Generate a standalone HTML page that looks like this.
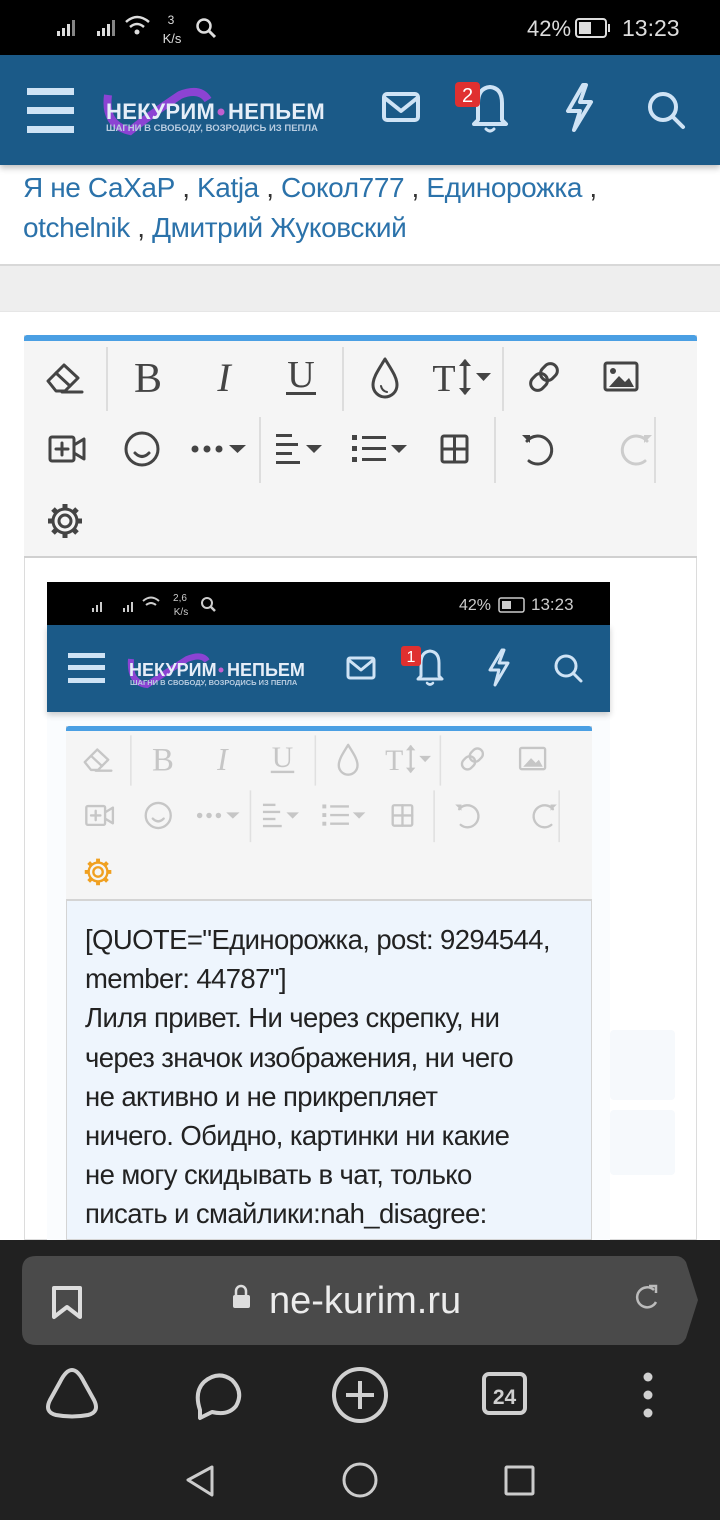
<!DOCTYPE html>
<html><head><meta charset="utf-8"><style>
*{margin:0;padding:0;box-sizing:border-box}
body{width:720px;height:1520px;overflow:hidden;background:#fff;font-family:"Liberation Sans",sans-serif;position:relative}
.abs{position:absolute}
.names{left:23px;top:168px;font-size:28px;line-height:40px;color:#2b72aa;letter-spacing:-0.4px}
.names span{color:#333}
.qt{left:85px;top:920px;font-size:27.5px;line-height:39.2px;color:#222;letter-spacing:-0.6px;white-space:nowrap}
</style></head><body>
<div class="abs" style="left:0;top:0;width:720px;height:55px;background:#000"></div>
<svg class="abs" style="left:0;top:0" width="720" height="55" fill="#ddd" stroke="#ddd">
<g stroke="none"><rect x="57" y="31" width="3" height="5"/><rect x="62" y="28" width="3" height="8"/><rect x="67" y="24" width="3" height="12"/><rect x="72" y="20" width="3" height="16" opacity=".6"/>
<rect x="97" y="31" width="3" height="5"/><rect x="102" y="28" width="3" height="8"/><rect x="107" y="24" width="3" height="12"/><rect x="112" y="20" width="3" height="16" opacity=".6"/></g>
<g fill="none" stroke-width="2.5"><path d="M126 22 Q137 12 149 22"/><path d="M130 27 Q137 21 144 27"/></g><circle cx="137" cy="32" r="2.5" stroke="none"/>
<text x="171" y="24" font-size="12" text-anchor="middle" stroke="none">3</text><text x="172" y="43" font-size="13" text-anchor="middle" stroke="none">K/s</text>
<circle cx="204" cy="26" r="6.5" fill="none" stroke-width="2.5"/><path d="M209 31 L215 37" stroke-width="3"/>
<text x="527" y="36" font-size="22" stroke="none">42%</text>
<rect x="576" y="19" width="30" height="18" rx="3" fill="none" stroke-width="2"/><rect x="579" y="22" width="12" height="12" stroke="none"/><rect x="608" y="24" width="2" height="8" stroke="none"/>
<text x="622" y="36" font-size="23" stroke="none">13:23</text>
</svg>
<div class="abs" style="left:0;top:55px;width:720px;height:110px;background:#1b5a88;box-shadow:0 3px 6px rgba(0,0,0,.25)"></div>
<svg class="abs" style="left:0;top:55px" width="720" height="110">
<g fill="#cfe3f5"><rect x="27" y="33" width="47" height="7"/><rect x="27" y="52" width="47" height="7"/><rect x="27" y="71" width="47" height="7"/></g>
<path d="M108 40 Q104 70 130 76 Q150 60 180 40 Q200 32 208 45" fill="none" stroke="#a040e0" stroke-width="8" opacity=".85"/>
<text x="106" y="64" font-size="22" font-weight="bold" fill="#e6eef8" letter-spacing="0.3">НЕКУРИМ</text>
<circle cx="221" cy="57" r="3.5" fill="#c060d0"/>
<text x="228" y="64" font-size="22" font-weight="bold" fill="#e6eef8" letter-spacing="0.3">НЕПЬЕМ</text>
<text x="106" y="76" font-size="9.5" font-weight="bold" fill="#b8cce0">ШАГНИ В СВОБОДУ, ВОЗРОДИСЬ ИЗ ПЕПЛА</text>
<g fill="none" stroke="#cfe3f5" stroke-width="4" stroke-linejoin="round" stroke-linecap="round">
<rect x="384" y="39" width="34" height="26" rx="3"/><path d="M386 44 L401 56 L416 44"/>
<path d="M478 65 L478 48 Q478 33 490 32 Q502 33 502 48 L502 65 L506 69 L474 69 Z"/><path d="M486 74 Q490 78 494 74" stroke-width="3"/>
<path d="M583 30 L568 56 L580 56 L574 75 L591 47 L580 47 L586 30 Z"/>
<circle cx="663" cy="52" r="13"/><path d="M673 62 L683 72"/>
</g>
<rect x="455" y="27" width="25" height="25" rx="4" fill="#e03030"/><text x="467.5" y="47" font-size="20" fill="#fff" text-anchor="middle">2</text>
</svg>
<div class="abs names">Я не СаХаР <span>,</span> Katja <span>,</span> Сокол777 <span>,</span> Единорожка <span>,</span><br>otchelnik <span>,</span> Дмитрий Жуковский</div>
<div class="abs" style="left:0;top:264px;width:720px;height:48px;background:#eeeeee;border-top:2px solid #d8d8d8;border-bottom:1px solid #e6e6e6"></div>
<div class="abs" style="left:24px;top:335px;width:673px;height:905px;border:1px solid #dcdcdc;border-top:none;background:#fff"></div>
<div class="abs" style="left:24px;top:335px;width:673px;height:223px;background:#f5f5f5;border-top:6px solid #4a9fe3;border-bottom:2px solid #d0d0d0;border-radius:3px 3px 0 0"></div>
<svg class="abs" style="left:24px;top:335px" width="673" height="223" color="#444">
<g stroke="#ddd" stroke-width="2"><path d="M83 12V76M319 12V76M479 12V76M236 82V148M471 82V148M631 82V148"/></g>
<g fill="none" stroke="currentColor" stroke-width="3" stroke-linejoin="round" stroke-linecap="round">
<path d="M24 46 L40 30 L54 43 L41 56 L32 56 Z"/><path d="M32 38 L46 51"/><path d="M38 57 H58"/>
<path d="M361 24 C355 34 349 42 349 50 A12 12 0 0 0 373 50 C373 42 367 34 361 24 Z"/><path d="M357 51 Q358 56 363 57" stroke-width="2"/>
<path d="M441 26 V58"/>
<g transform="rotate(-45 520 42)"><rect x="504" y="35" width="18" height="14" rx="7"/><rect x="518" y="35" width="18" height="14" rx="7"/></g>
<rect x="581" y="28" width="32" height="27" rx="2"/>
<rect x="26" y="102" width="24" height="24" rx="2"/><path d="M38 108V120M32 114H44"/><path d="M50 110 L60 104 V124 L50 118"/>
<circle cx="118" cy="114" r="16"/><path d="M111 118 Q118 125 125 118"/>
<rect x="418" y="101" width="25" height="26" rx="2"/><path d="M418 114H443M430.5 101V127"/>
<path d="M503 106 A14 14 0 1 1 505 126"/>
<path d="M623 106 A14 14 0 1 0 621 126" stroke="#ccc"/>
<circle cx="41" cy="186" r="6"/><circle cx="41" cy="186" r="12" stroke-width="3"/>
</g>
<g fill="currentColor">
<text x="124" y="57" font-family="Liberation Serif" font-size="42" text-anchor="middle">B</text>
<text x="200" y="56" font-family="Liberation Serif" font-style="italic" font-size="40" text-anchor="middle">I</text>
<text x="277" y="52" font-family="Liberation Serif" font-size="38" text-anchor="middle">U</text><rect x="262" y="57" width="30" height="3"/>
<text x="420" y="56" font-family="Liberation Serif" font-size="38" text-anchor="middle">T</text>
<path d="M435 31 L441 24 L447 31 Z M435 53 L441 60 L447 53 Z"/><path d="M452 38 H467 L459.5 46 Z"/>
<path d="M585 52 L595 41 L601 47 L605 43 L610 52 Z"/><circle cx="589" cy="36" r="3"/>
<circle cx="171" cy="114" r="3.5"/><circle cx="183" cy="114" r="3.5"/><circle cx="195" cy="114" r="3.5"/><path d="M205 110 H222 L213.5 118 Z"/>
<rect x="252" y="99" width="16" height="3"/><rect x="252" y="108" width="22" height="3"/><rect x="252" y="117" width="16" height="3"/><rect x="252" y="126" width="24" height="3"/><path d="M282 110 H298 L290 118 Z"/>
<rect x="328" y="100" width="5" height="5"/><rect x="328" y="111" width="5" height="5"/><rect x="328" y="122" width="5" height="5"/>
<rect x="338" y="101" width="24" height="3"/><rect x="338" y="112" width="24" height="3"/><rect x="338" y="123" width="24" height="3"/><path d="M367 110 H383 L375 118 Z"/>
<path d="M498 100 L506 100 L506 108 Z"/><path d="M628 100 L620 100 L620 108 Z" fill="#ccc"/>
</g>
<g stroke="currentColor" stroke-width="5"><path d="M41 169V174M41 198V203M24 186H29M53 186H58M29 174L32.5 177.5M49.5 194.5L53 198M29 198L32.5 194.5M49.5 177.5L53 174"/></g>
</svg>
<div class="abs" style="left:47px;top:582px;width:563px;height:658px;background:#fafcfe"></div>
<div class="abs" style="left:47px;top:582px;width:563px;height:43px;background:#000"></div>
<svg class="abs" style="left:47px;top:582px" width="563" height="43" fill="#ccc" stroke="#ccc">
<g stroke="none"><rect x="45" y="26" width="2" height="4"/><rect x="49" y="23" width="2" height="7"/><rect x="53" y="20" width="2" height="10"/><rect x="76" y="26" width="2" height="4"/><rect x="80" y="23" width="2" height="7"/><rect x="84" y="20" width="2" height="10"/></g>
<path d="M96 19 Q104 12 112 19M99 23 Q104 19 109 23" fill="none" stroke-width="2"/>
<text x="133" y="19" font-size="10" text-anchor="middle" stroke="none">2,6</text><text x="134" y="33" font-size="10" text-anchor="middle" stroke="none">K/s</text>
<circle cx="160" cy="21" r="5" fill="none" stroke-width="2"/><path d="M164 25 L168 29" stroke-width="2.5"/>
<text x="412" y="28" font-size="16" stroke="none">42%</text>
<rect x="452" y="16" width="25" height="14" rx="2" fill="none" stroke-width="1.5"/><rect x="455" y="19" width="9" height="8" stroke="none"/>
<text x="484" y="28" font-size="17" stroke="none">13:23</text>
</svg>
<div class="abs" style="left:47px;top:625px;width:563px;height:87px;background:#1b5a88;box-shadow:0 3px 6px rgba(0,0,0,.2)"></div>
<svg class="abs" style="left:47px;top:625px" width="563" height="87">
<g fill="#cfe3f5"><rect x="21" y="28" width="37" height="5"/><rect x="21" y="40" width="37" height="5"/><rect x="21" y="53" width="37" height="5"/></g>
<path d="M84 34 Q82 58 100 60 Q118 48 140 34 Q155 28 160 36" fill="none" stroke="#a040e0" stroke-width="6" opacity=".85"/>
<text x="82" y="51" font-size="18" font-weight="bold" fill="#e6eef8">НЕКУРИМ</text><circle cx="174" cy="45" r="2.5" fill="#c060d0"/>
<text x="180" y="51" font-size="18" font-weight="bold" fill="#e6eef8">НЕПЬЕМ</text>
<text x="83" y="60" font-size="7.5" font-weight="bold" fill="#b8cce0">ШАГНИ В СВОБОДУ, ВОЗРОДИСЬ ИЗ ПЕПЛА</text>
<g fill="none" stroke="#cfe3f5" stroke-width="3" stroke-linejoin="round" stroke-linecap="round">
<rect x="301" y="33" width="26" height="20" rx="2"/><path d="M303 36 L314 45 L325 36"/>
<path d="M374 51 L374 38 Q374 27 383 26 Q392 27 392 38 L392 51 L395 54 L371 54 Z"/><path d="M380 58 Q383 61 386 58" stroke-width="2.5"/>
<path d="M455 25 L443 45 L452 45 L448 60 L461 38 L452 38 L457 25 Z"/>
<circle cx="519" cy="41" r="10"/><path d="M527 49 L534 56"/>
</g>
<rect x="354" y="21" width="20" height="20" rx="3" fill="#e03030"/><text x="364" y="37" font-size="16" fill="#fff" text-anchor="middle">1</text>
</svg>
<div class="abs" style="left:66px;top:726px;width:526px;height:514px;border:1px solid #d4d4d4;border-top:none;background:#eef5fd"></div>
<div class="abs" style="left:66px;top:726px;width:526px;height:175px;background:#f5f5f5;border-top:5px solid #4a9fe3;border-bottom:2px solid #d4d4d4;border-radius:3px 3px 0 0"></div>
<svg class="abs" style="left:66px;top:726px" width="526" height="175" viewBox="0 0 673 223" preserveAspectRatio="none" color="#c6c6c6">
<g stroke="#e0e0e0" stroke-width="2"><path d="M83 12V76M319 12V76M479 12V76M236 82V148M471 82V148M631 82V148"/></g>
<g fill="none" stroke="currentColor" stroke-width="3" stroke-linejoin="round" stroke-linecap="round">
<path d="M24 46 L40 30 L54 43 L41 56 L32 56 Z"/><path d="M32 38 L46 51"/><path d="M38 57 H58"/>
<path d="M361 24 C355 34 349 42 349 50 A12 12 0 0 0 373 50 C373 42 367 34 361 24 Z"/>
<path d="M441 26 V58"/>
<g transform="rotate(-45 520 42)"><rect x="504" y="35" width="18" height="14" rx="7"/><rect x="518" y="35" width="18" height="14" rx="7"/></g>
<rect x="581" y="28" width="32" height="27" rx="2"/>
<rect x="26" y="102" width="24" height="24" rx="2"/><path d="M38 108V120M32 114H44"/><path d="M50 110 L60 104 V124 L50 118"/>
<circle cx="118" cy="114" r="16"/><path d="M111 118 Q118 125 125 118"/>
<rect x="418" y="101" width="25" height="26" rx="2"/><path d="M418 114H443M430.5 101V127"/>
<path d="M503 106 A14 14 0 1 1 505 126"/><path d="M623 106 A14 14 0 1 0 621 126"/>
<circle cx="41" cy="186" r="6" stroke="#f0a020"/><circle cx="41" cy="186" r="12" stroke="#f0a020"/>
</g>
<g fill="currentColor">
<text x="124" y="57" font-family="Liberation Serif" font-size="42" text-anchor="middle">B</text>
<text x="200" y="56" font-family="Liberation Serif" font-style="italic" font-size="40" text-anchor="middle">I</text>
<text x="277" y="52" font-family="Liberation Serif" font-size="38" text-anchor="middle">U</text><rect x="262" y="57" width="30" height="3"/>
<text x="420" y="56" font-family="Liberation Serif" font-size="38" text-anchor="middle">T</text>
<path d="M435 31 L441 24 L447 31 Z M435 53 L441 60 L447 53 Z"/><path d="M452 38 H467 L459.5 46 Z"/>
<path d="M585 52 L595 41 L601 47 L605 43 L610 52 Z"/>
<circle cx="171" cy="114" r="3.5"/><circle cx="183" cy="114" r="3.5"/><circle cx="195" cy="114" r="3.5"/><path d="M205 110 H222 L213.5 118 Z"/>
<rect x="252" y="99" width="16" height="3"/><rect x="252" y="108" width="22" height="3"/><rect x="252" y="117" width="16" height="3"/><rect x="252" y="126" width="24" height="3"/><path d="M282 110 H298 L290 118 Z"/>
<rect x="328" y="100" width="5" height="5"/><rect x="328" y="111" width="5" height="5"/><rect x="328" y="122" width="5" height="5"/>
<rect x="338" y="101" width="24" height="3"/><rect x="338" y="112" width="24" height="3"/><rect x="338" y="123" width="24" height="3"/><path d="M367 110 H383 L375 118 Z"/>
<path d="M498 100 L506 100 L506 108 Z"/><path d="M628 100 L620 100 L620 108 Z"/>
</g>
<g stroke="#f0a020" stroke-width="5"><path d="M41 169V174M41 198V203M24 186H29M53 186H58M29 174L32.5 177.5M49.5 194.5L53 198M29 198L32.5 194.5M49.5 177.5L53 174"/></g>
</svg>
<div class="abs qt">[QUOTE="Единорожка, post: 9294544,<br>member: 44787"]<br>Лиля привет. Ни через скрепку, ни<br>через значок изображения, ни чего<br>не активно и не прикрепляет<br>ничего. Обидно, картинки ни какие<br>не могу скидывать в чат, только<br>писать и смайлики:nah_disagree:<br>[/QUOTE]</div>
<div class="abs" style="left:610px;top:1030px;width:65px;height:70px;background:#f6f9fc;border-radius:4px"></div>
<div class="abs" style="left:610px;top:1110px;width:65px;height:65px;background:#f6f9fc;border-radius:4px"></div>
<div class="abs" style="left:0;top:1240px;width:720px;height:280px;background:#212121"></div>
<svg class="abs" style="left:0;top:1240px" width="720" height="280">
<path d="M36 16 H676 Q682 16 686 22 L698 60 L686 98 Q682 105 676 105 H36 Q22 105 22 91 V30 Q22 16 36 16 Z" fill="#4a4a4a"/>
<path d="M54 48 H80 V77 L67 67 L54 77 Z" fill="none" stroke="#ddd" stroke-width="4" stroke-linejoin="round"/>
<rect x="233" y="55" width="17" height="13" rx="2" fill="#ddd"/><path d="M236 56 V51 A5 5 0 0 1 246 51 V56" fill="none" stroke="#ddd" stroke-width="2.5"/>
<text x="269" y="73" font-size="38" fill="#ececec">ne-kurim.ru</text>
<path d="M654 50 A10 10 0 1 0 656 62" fill="none" stroke="#bbb" stroke-width="2.5"/><path d="M649 46 L656 46 L656 53" fill="none" stroke="#bbb" stroke-width="2.5"/>
<g fill="none" stroke="#d0d0d0" stroke-width="4" stroke-linejoin="round">
<path d="M72 130 Q78 130 84 142 L94 160 Q100 172 88 175 Q72 178 56 175 Q44 172 50 160 L60 142 Q66 130 72 130 Z"/>
<path d="M200 170 Q194 152 204 142 Q218 130 232 140 Q244 152 236 166 Q228 176 212 172 L200 178 Z"/>
<circle cx="360" cy="155" r="26"/><path d="M360 141 V169 M346 155 H374"/>
<rect x="484" y="134" width="41" height="39" rx="5"/>
</g>
<text x="504.5" y="164" font-size="21" font-weight="bold" fill="#d0d0d0" text-anchor="middle">24</text>
<g fill="#d0d0d0"><circle cx="648" cy="137" r="4.5"/><circle cx="648" cy="155" r="4.5"/><circle cx="648" cy="173" r="4.5"/></g>
<g fill="none" stroke="#ccc" stroke-width="3" stroke-linejoin="round">
<path d="M212 227 L188 240 L212 255 Z"/><circle cx="360" cy="240" r="16"/><rect x="506" y="227" width="27" height="27" rx="1"/>
</g>
</svg>
</body></html>
